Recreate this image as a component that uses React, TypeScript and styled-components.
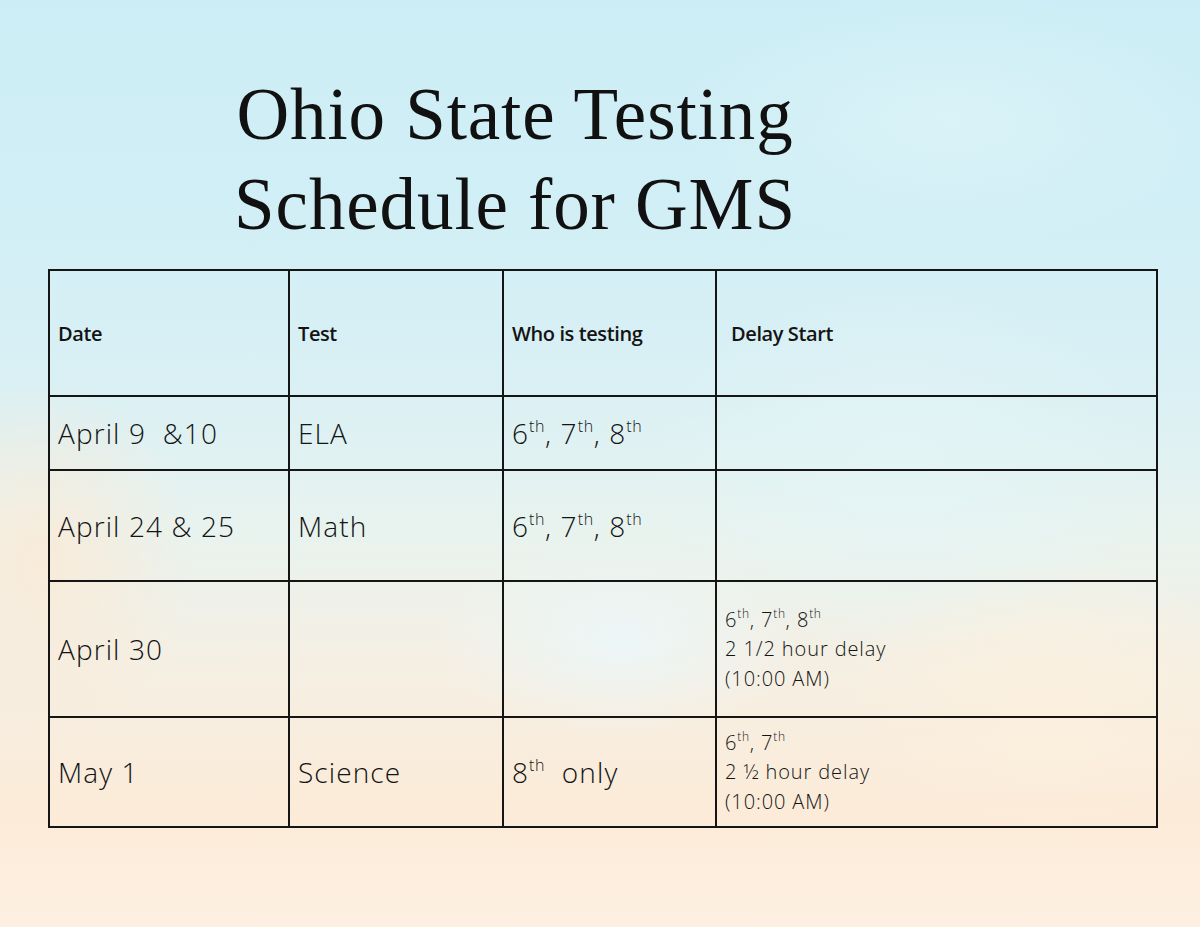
import React from "react";
import styled, { createGlobalStyle } from "styled-components";

const Global = createGlobalStyle`
  html, body { margin: 0; padding: 0; }
  body { width: 1200px; height: 927px; overflow: hidden; }
`;

const Page = styled.div`
  width: 1200px;
  height: 927px;
  box-sizing: border-box;
  padding: 70px 0 0 48px;
  display: flex;
  flex-direction: column;
  background:
    radial-gradient(ellipse 260px 140px at 620px 640px, rgba(235, 247, 250, 0.85), rgba(235, 247, 250, 0) 70%),
    radial-gradient(ellipse 220px 260px at 40px 560px, rgba(250, 234, 215, 0.9), rgba(250, 234, 215, 0) 70%),
    radial-gradient(ellipse 300px 200px at 1050px 700px, rgba(252, 240, 222, 0.8), rgba(252, 240, 222, 0) 70%),
    radial-gradient(ellipse 360px 260px at 900px 470px, rgba(228, 245, 246, 0.8), rgba(228, 245, 246, 0) 70%),
    radial-gradient(ellipse 400px 180px at 950px 120px, rgba(220, 244, 248, 0.8), rgba(220, 244, 248, 0) 70%),
    linear-gradient(
      180deg,
      #ccedf5 0%,
      #d2eff6 25%,
      #daf0f4 42%,
      #e8f3ef 57%,
      #f5efe3 72%,
      #fcebd8 88%,
      #fdf0e2 100%
    );
`;

const Title = styled.h1`
  margin: 0;
  width: 934px;
  text-align: center;
  font-family: "Liberation Serif", "Times New Roman", serif;
  font-weight: 400;
  font-size: 73px;
  line-height: 90px;
  color: #111;
  letter-spacing: 0.9px;
`;

const Table = styled.table`
  margin-top: 19px;
  width: 1108px;
  border-collapse: collapse;
  table-layout: fixed;
  font-family: "Open Sans", "Noto Sans", sans-serif;
  color: #141414;
`;

const Col = styled.col<{ $w: number }>`
  width: ${(p) => p.$w}px;
`;

const Row = styled.tr<{ $h: number }>`
  height: ${(p) => p.$h}px;
`;

const HeadCell = styled.th<{ $indent?: number }>`
  border: 2px solid #151515;
  padding: 0 0 0 ${(p) => 8 + (p.$indent || 0)}px;
  text-align: left;
  vertical-align: middle;
  font-size: 20px;
  font-weight: 600;
  letter-spacing: -0.4px;
`;

const Cell = styled.td`
  border: 2px solid #151515;
  padding: 0 0 0 8px;
  vertical-align: middle;
  font-size: 28px;
  font-weight: 300;
  letter-spacing: 1.1px;
`;

const NoteCell = styled.td`
  border: 2px solid #151515;
  padding: 0 0 0 8px;
  vertical-align: middle;
  font-size: 20px;
  font-weight: 300;
  letter-spacing: 0.9px;
`;

const Sup = styled.sup<{ $s?: number }>`
  font-size: ${(p) => p.$s || 16}px;
  line-height: 0;
  vertical-align: 0;
  position: relative;
  top: -0.75em;
  letter-spacing: 0.6px;
`;

const Line = styled.div`
  height: 29.5px;
  line-height: 29.5px;
`;

const Grades: React.FC<{ list: string[]; sup?: number }> = ({ list, sup }) => (
  <>
    {list.map((g, i) => (
      <React.Fragment key={g}>
        {g}
        <Sup $s={sup}>th</Sup>
        {i < list.length - 1 ? ", " : ""}
      </React.Fragment>
    ))}
  </>
);

export default function App() {
  return (
    <>
      <Global />
      <Page>
        <Title>
          Ohio State Testing
          <br />
          Schedule for GMS
        </Title>
        <Table>
          <colgroup>
            <Col $w={240} />
            <Col $w={214} />
            <Col $w={213} />
            <Col $w={441} />
          </colgroup>
          <thead>
            <Row $h={126}>
              <HeadCell>Date</HeadCell>
              <HeadCell>Test</HeadCell>
              <HeadCell>Who is testing</HeadCell>
              <HeadCell $indent={6}>Delay Start</HeadCell>
            </Row>
          </thead>
          <tbody>
            <Row $h={74}>
              <Cell>April 9&nbsp; &amp;10</Cell>
              <Cell>ELA</Cell>
              <Cell>
                <Grades list={["6", "7", "8"]} />
              </Cell>
              <Cell />
            </Row>
            <Row $h={111}>
              <Cell>April 24 &amp; 25</Cell>
              <Cell>Math</Cell>
              <Cell>
                <Grades list={["6", "7", "8"]} />
              </Cell>
              <Cell />
            </Row>
            <Row $h={136}>
              <Cell>April 30</Cell>
              <Cell />
              <Cell />
              <NoteCell>
                <Line>
                  <Grades list={["6", "7", "8"]} sup={12} />
                </Line>
                <Line>2 1/2 hour delay</Line>
                <Line>(10:00 AM)</Line>
              </NoteCell>
            </Row>
            <Row $h={110}>
              <Cell>May 1</Cell>
              <Cell>Science</Cell>
              <Cell>
                8<Sup>th</Sup>&nbsp; only
              </Cell>
              <NoteCell>
                <Line>
                  <Grades list={["6", "7"]} sup={12} />
                </Line>
                <Line>2 ½ hour delay</Line>
                <Line>(10:00 AM)</Line>
              </NoteCell>
            </Row>
          </tbody>
        </Table>
      </Page>
    </>
  );
}
